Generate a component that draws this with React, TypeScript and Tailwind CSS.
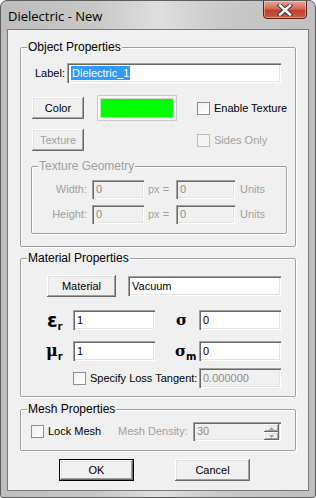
import React from 'react';

const raised =
  'shadow-[inset_-1px_-1px_0_#696969,inset_1px_1px_0_#ffffff,inset_-2px_-2px_0_#a0a0a0,inset_2px_2px_0_#e3e3e3]';
const sunken =
  'shadow-[inset_1px_1px_0_#a0a0a0,inset_2px_2px_0_#696969,inset_-1px_-1px_0_#ffffff,inset_-2px_-2px_0_#e3e3e3]';

function Btn({ w, label, disabled, def }: { w: string; label: string; disabled?: boolean; def?: boolean }) {
  return (
    <div className={`${w} h-[22px] shrink-0 ${def ? 'border border-black' : ''}`}>
      <div
        className={`w-full h-full flex items-center justify-center bg-[#f0f0f0] ${raised} ${
          disabled ? 'text-[#a0a0a0]' : 'text-black'
        }`}
      >
        {label}
      </div>
    </div>
  );
}

function Edit({
  w,
  h = 'h-[20px]',
  value,
  disabled,
  selected,
}: {
  w: string;
  h?: string;
  value: string;
  disabled?: boolean;
  selected?: boolean;
}) {
  return (
    <div
      className={`${w} ${h} shrink-0 flex items-center pl-[4px] ${sunken} ${
        disabled ? 'bg-[#f0f0f0] text-[#8d8d8d]' : 'bg-white text-black'
      }`}
    >
      {selected ? <span className="bg-[#3399ff] text-white leading-[14px] px-[1px]">{value}</span> : value}
    </div>
  );
}

function Check({ label, disabled }: { label: string; disabled?: boolean }) {
  return (
    <div className={`flex items-center ${disabled ? 'text-[#a0a0a0]' : 'text-black'}`}>
      <div
        className={`w-[13px] h-[13px] shrink-0 border ${
          disabled ? 'border-[#bcbcbc] bg-[#f4f4f4]' : 'border-[#8e8f8f] bg-[linear-gradient(135deg,#f0f0f0,#ffffff)]'
        }`}
      />
      <span className="ml-[4px]">{label}</span>
    </div>
  );
}

function Group({
  title,
  className,
  children,
  disabled,
}: {
  title: string;
  className: string;
  children: React.ReactNode;
  disabled?: boolean;
}) {
  return (
    <div
      className={`relative shrink-0 border border-[#a0a0a0] rounded-[2px] shadow-[inset_1px_1px_0_#ffffff,1px_1px_0_#ffffff] ${className}`}
    >
      <div
        className={`absolute left-[6px] top-[-8px] px-[1px] bg-[#f0f0f0] leading-[14px] text-[12px] ${
          disabled ? 'text-[#a0a0a0]' : 'text-black'
        }`}
      >
        {title}
      </div>
      {children}
    </div>
  );
}

function Sym({ main, sub, mainClass }: { main: string; sub?: string; mainClass: string }) {
  return (
    <div className="flex items-end text-black">
      <span className={mainClass}>{main}</span>
      {sub && (
        <span className="font-['DejaVu_Sans',sans-serif] font-bold text-[10px] leading-[10px] mb-[-4px]">{sub}</span>
      )}
    </div>
  );
}

export default function App() {
  return (
    <div className="w-[316px] h-[498px] flex flex-col rounded-t-[7px] rounded-b-[3px] border border-[#5e5e5e] bg-[linear-gradient(90deg,#bdbdbd_0%,#c8c8c8_30%,#dedede_50%,#cacaca_70%,#bfbfbf_100%)] font-['Liberation_Sans',Arial,sans-serif] text-[11px] overflow-hidden">
      {/* Title bar */}
      <div className="h-[28px] flex items-start justify-between shrink-0">
        <div className="pl-[7px] pt-[7px] text-[13px] leading-[16px] text-black font-['Open_Sans','Liberation_Sans',sans-serif]">
          Dielectric - New
        </div>
        <div className="mr-[8px] mt-[-1px] w-[44px] h-[19px] rounded-b-[4px] border border-[#5a2319] bg-[linear-gradient(180deg,#e7a897_0%,#d46a55_45%,#c2402b_55%,#c85a45_100%)] flex items-center justify-center shadow-[inset_0_0_0_1px_rgba(255,255,255,0.35)]">
          <svg width="16" height="12" viewBox="0 0 16 12">
            <path d="M3 1.5 L13 10.5 M13 1.5 L3 10.5" stroke="#3c3c3c" strokeWidth="4.4" strokeLinecap="square" />
            <path d="M3 1.5 L13 10.5 M13 1.5 L3 10.5" stroke="#ffffff" strokeWidth="2.4" strokeLinecap="square" />
          </svg>
        </div>
      </div>

      {/* Client area */}
      <div className="ml-[6px] w-[302px] h-[462px] border border-[#7a7a7a] bg-[#f0f0f0] flex flex-col px-[12px] shrink-0">
        {/* Object Properties */}
        <Group title="Object Properties" className="mt-[17px] h-[200px]">
          <div className="flex items-center h-[20px] mt-[15px] ml-[14px]">
            <span className="w-[32px]">Label:</span>
            <Edit w="w-[214px]" value="Dielectric_1" selected />
          </div>
          <div className="flex items-center h-[26px] mt-[12px] ml-[11px]">
            <Btn w="w-[52px]" label="Color" />
            <div className="ml-[13px] w-[80px] h-[26px] border border-[#c9c9c9] bg-[#f7f7f7] p-[2px] shadow-[inset_1px_1px_0_#ffffff]">
              <div className="w-full h-full bg-[#00ff00] border border-[#d8d8d8]" />
            </div>
            <div className="ml-[20px]">
              <Check label="Enable Texture" />
            </div>
          </div>
          <div className="flex items-center h-[22px] mt-[8px] ml-[11px]">
            <Btn w="w-[52px]" label="Texture" disabled />
            <div className="ml-[113px]">
              <Check label="Sides Only" disabled />
            </div>
          </div>
          <Group title="Texture Geometry" disabled className="ml-[10px] mt-[15px] w-[256px] h-[68px]">
            <div className="flex items-center h-[19px] mt-[13px] text-[#a0a0a0]">
              <span className="w-[55px] text-right">Width:</span>
              <Edit w="w-[52px] ml-[5px]" h="h-[19px]" value="0" disabled />
              <span className="ml-[4px] w-[28px]">px =</span>
              <Edit w="w-[59px]" h="h-[19px]" value="0" disabled />
              <span className="ml-[5px]">Units</span>
            </div>
            <div className="flex items-center h-[19px] mt-[6px] text-[#a0a0a0]">
              <span className="w-[55px] text-right">Height:</span>
              <Edit w="w-[52px] ml-[5px]" h="h-[19px]" value="0" disabled />
              <span className="ml-[4px] w-[28px]">px =</span>
              <Edit w="w-[59px]" h="h-[19px]" value="0" disabled />
              <span className="ml-[5px]">Units</span>
            </div>
          </Group>
        </Group>

        {/* Material Properties */}
        <Group title="Material Properties" className="mt-[11px] h-[139px]">
          <div className="flex items-center h-[22px] mt-[16px] ml-[26px]">
            <Btn w="w-[69px]" label="Material" />
            <Edit w="w-[153px] ml-[12px]" value="Vacuum" />
          </div>
          <div className="flex items-center h-[20px] mt-[13px] ml-[21px]">
            <div className="w-[31px] pl-[5px]">
              <Sym main="ε" sub="r" mainClass="font-['DejaVu_Sans',sans-serif] font-semibold text-[19px] leading-[16px]" />
            </div>
            <Edit w="w-[82px]" value="1" />
            <div className="w-[44px] pl-[21px]">
              <Sym main="σ" mainClass="font-['DejaVu_Serif',serif] font-bold text-[15px] leading-[14px]" />
            </div>
            <Edit w="w-[82px]" value="0" />
          </div>
          <div className="flex items-center h-[20px] mt-[11px] ml-[21px]">
            <div className="w-[31px] pl-[4px]">
              <Sym main="μ" sub="r" mainClass="font-['DejaVu_Serif',serif] font-bold text-[16px] leading-[14px]" />
            </div>
            <Edit w="w-[82px]" value="1" />
            <div className="w-[44px] pl-[20px]">
              <Sym main="σ" sub="m" mainClass="font-['DejaVu_Serif',serif] font-bold text-[15px] leading-[14px]" />
            </div>
            <Edit w="w-[82px]" value="0" />
          </div>
          <div className="flex items-center h-[20px] mt-[7px] ml-[52px]">
            <div className="w-[126px]">
              <Check label="Specify Loss Tangent:" />
            </div>
            <Edit w="w-[82px]" value="0.000000" disabled />
          </div>
        </Group>

        {/* Mesh Properties */}
        <Group title="Mesh Properties" className="mt-[12px] h-[42px]">
          <div className="flex items-center h-[19px] mt-[12px] ml-[10px]">
            <div className="w-[87px]">
              <Check label="Lock Mesh" />
            </div>
            <span className="w-[75px] text-[#a0a0a0]">Mesh Density:</span>
            <div className={`w-[88px] h-[19px] flex items-center justify-between pl-[4px] bg-[#f0f0f0] text-[#8d8d8d] ${sunken}`}>
              <span>30</span>
              <div className="flex flex-col mr-[2px] mt-[1px]">
                {[0, 1].map((i) => (
                  <div key={i} className={`w-[15px] h-[8px] flex items-center justify-center bg-[#f0f0f0] ${raised}`}>
                    <svg width="5" height="3" viewBox="0 0 5 3">
                      <path d={i === 0 ? 'M0 3 L2.5 0 L5 3 Z' : 'M0 0 L2.5 3 L5 0 Z'} fill="#a0a0a0" />
                    </svg>
                  </div>
                ))}
              </div>
            </div>
          </div>
        </Group>

        {/* Buttons */}
        <div className="flex mt-[8px] ml-[39px]">
          <Btn w="w-[75px]" label="OK" def />
          <div className="ml-[41px]">
            <Btn w="w-[75px]" label="Cancel" />
          </div>
        </div>
      </div>
    </div>
  );
}
